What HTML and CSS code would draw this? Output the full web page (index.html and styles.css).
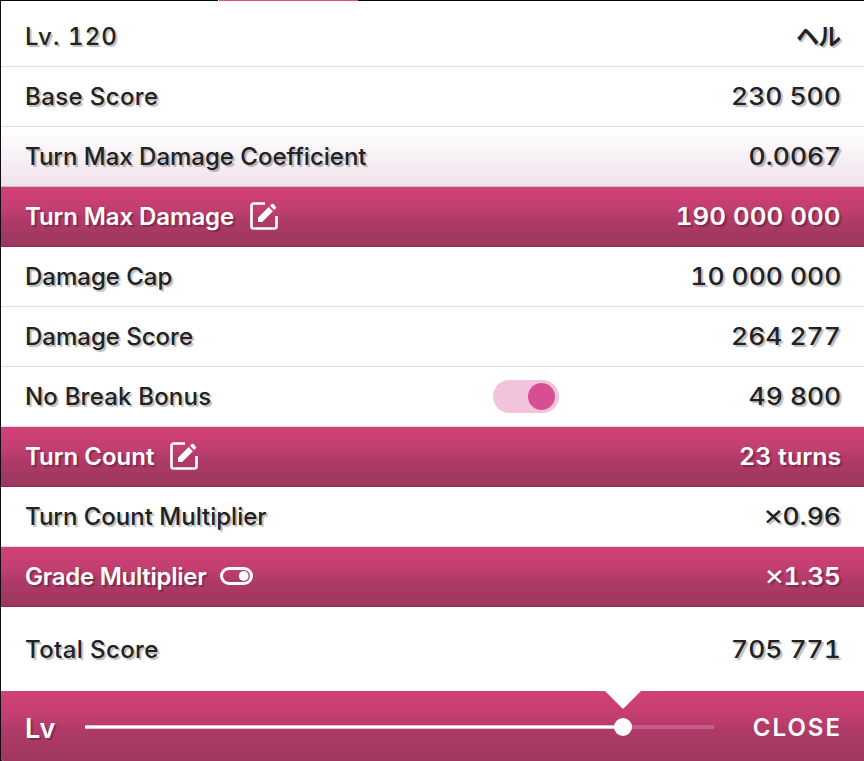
FILE: index.html
```html
<!DOCTYPE html>
<html lang="en">
<head>
  <meta charset="UTF-8">
  <meta name="viewport" content="width=device-width, initial-scale=1.0">
  <title>Score Calculator</title>
  <link rel="stylesheet" href="styles.css">
</head>
<body>
  <div class="topbar"><span class="tab-line"></span></div>

  <main class="panel">
    <div class="row first">
      <span class="label level">Lv. 120</span>
      <span class="value kana" lang="ja">ヘル</span>
    </div>
    <div class="row">
      <span class="label short">Base Score</span>
      <span class="value">230 500</span>
    </div>
    <div class="row shaded">
      <span class="label">Turn Max Damage Coefficient</span>
      <span class="value">0.0067</span>
    </div>
    <div class="row active">
      <span class="label">Turn Max Damage</span>
      <svg class="edit" viewBox="0 0 28 28">
        <path d="M15 1.500H3.500a2 2 0 0 0-2 2v21a2 2 0 0 0 2 2h21a2 2 0 0 0 2-2V14" fill="none" stroke="#fff" stroke-width="2.600"/>
        <path d="M8 20v-4.200L18.700 5.100l4.200 4.200L12.200 20zM20 3.800l1.700-1.700q.8-.8 1.600 0l2.600 2.600q.8.8 0 1.600l-1.700 1.700z" fill="#fff"/>
      </svg>
      <span class="value">190 000 000</span>
    </div>
    <div class="row">
      <span class="label">Damage Cap</span>
      <span class="value">10 000 000</span>
    </div>
    <div class="row">
      <span class="label">Damage Score</span>
      <span class="value">264 277</span>
    </div>
    <div class="row">
      <span class="label bonus">No Break Bonus</span>
      <span class="switch"><span class="knob"></span></span>
      <span class="value">49 800</span>
    </div>
    <div class="row active">
      <span class="label count">Turn Count</span>
      <svg class="edit" viewBox="0 0 28 28">
        <path d="M15 1.500H3.500a2 2 0 0 0-2 2v21a2 2 0 0 0 2 2h21a2 2 0 0 0 2-2V14" fill="none" stroke="#fff" stroke-width="2.600"/>
        <path d="M8 20v-4.200L18.700 5.100l4.200 4.200L12.200 20zM20 3.800l1.700-1.700q.8-.8 1.600 0l2.600 2.600q.8.8 0 1.600l-1.700 1.700z" fill="#fff"/>
      </svg>
      <span class="value turns">23 turns</span>
    </div>
    <div class="row">
      <span class="label">Turn Count Multiplier</span>
      <span class="value"><span class="times">×</span>0.96</span>
    </div>
    <div class="row active">
      <span class="label grade-label">Grade Multiplier</span>
      <svg class="grade" viewBox="0 0 33 18">
        <rect x="1.500" y="1.500" width="30" height="15" rx="7.500" fill="none" stroke="#fff" stroke-width="3"/>
        <circle cx="23.700" cy="9" r="4.900" fill="#fff"/>
      </svg>
      <span class="value"><span class="times">×</span>1.35</span>
    </div>
    <div class="row total">
      <span class="label short">Total Score</span>
      <span class="value">705 771</span>
    </div>

    <div class="footer">
      <span class="lv">Lv</span>
      <div class="slider">
        <div class="fill"></div>
        <div class="thumb"></div>
        <div class="pointer"></div>
      </div>
      <button class="close" type="button">CLOSE</button>
    </div>
  </main>
</body>
</html>
```
FILE: styles.css
```css
* { box-sizing: border-box; }
body {
  margin: 0;
  background: #140c1c;
  color: #222;
  font: 500 24px/30px Inter, "Noto Sans CJK JP", sans-serif;
  overflow: hidden;
}
.topbar { height: 1px; background: #0a0410; padding-left: 218px; }
.tab-line { display: block; width: 140px; height: 1px; background: #d84e93; border-left: 1px solid #fff; }

.panel { margin-left: 1px; background: #fff; border-radius: 0 0 0 3px; overflow: hidden; }
.row {
  display: flex;
  align-items: center;
  height: 60px;
  padding: 0 23px 1px 24px;
  border-bottom: 1px solid #dedede;
  text-shadow: 2px 2px 1px rgba(0, 0, 0, .26);
  white-space: nowrap;
}
.row.first { height: 66px; padding-top: 6px; }
.row.shaded { background: linear-gradient(#fff, #f0e3ec); border-bottom-color: #cdc1c9; }
.row.active {
  color: #fff;
  font-weight: 600;
  background: linear-gradient(#d24177, #c13e70 38%, #b03a68 55%, #9c375d);
  border-bottom-color: #822d54;
}
.row.total { height: 84px; border: 0; padding-bottom: 0; }

.label, .value { padding-top: 2px; }
.active .label { letter-spacing: -.1px; }
.active .grade-label { letter-spacing: -.27px; }
.active .count { letter-spacing: 0; }
.short { letter-spacing: .4px; }
.level { letter-spacing: 1.1px; font-feature-settings: "tnum"; }

/* wide digits */
.value {
  margin-left: auto;
  font-weight: 550;
  font-feature-settings: "tnum";
  transform: scaleX(1.1);
  transform-origin: right;
}
.active .value { font-weight: 600; transform: scaleX(1.08); }
.kana { font-feature-settings: "palt"; font-weight: 700; transform: scaleX(.95); }
.active .turns { transform: scaleX(1.04); }
.times { font-size: 29px; line-height: 24px; font-weight: 400; margin: 0 -1px 0 0; }

.edit { width: 28px; height: 28px; margin-left: 16px; }
.grade { width: 33px; height: 18px; margin-left: 14px; }

.bonus { width: 468px; letter-spacing: .2px; }
.switch { display: flex; align-items: center; justify-content: flex-end; width: 66px; height: 33px; padding-right: 4px; border-radius: 17px; background: #f1c4dc; }
.knob { width: 27px; height: 27px; border-radius: 50%; background: #d84e93; }

.footer {
  display: flex;
  align-items: center;
  height: 70px;
  padding: 2px 24px 0;
  color: #fff;
  background: linear-gradient(#d24177, #c13e70 38%, #b03a68 55%, #9c375d);
}
.lv { width: 60px; padding-top: 3px; font-weight: 600; font-size: 27px; letter-spacing: 1px; text-shadow: 2px 2px 1px rgba(0, 0, 0, .26); }
.slider { position: relative; width: 629px; height: 4px; background: #c45d88; }
.fill { width: 538px; height: 4px; background: #fff; border: solid #e9bccd; border-width: 1px 0; }
.thumb { position: absolute; left: 529px; top: -7px; width: 18px; height: 18px; border-radius: 50%; background: #fff; }
.pointer { position: absolute; left: 519px; top: -35px; border: solid transparent; border-width: 19px 19px 0; border-top-color: #fff; }
.close { margin-left: auto; padding: 2px 0 0; border: 0; background: none; color: #fff; font: inherit; font-weight: 600; letter-spacing: 2px; margin-right: -2px; }
```
